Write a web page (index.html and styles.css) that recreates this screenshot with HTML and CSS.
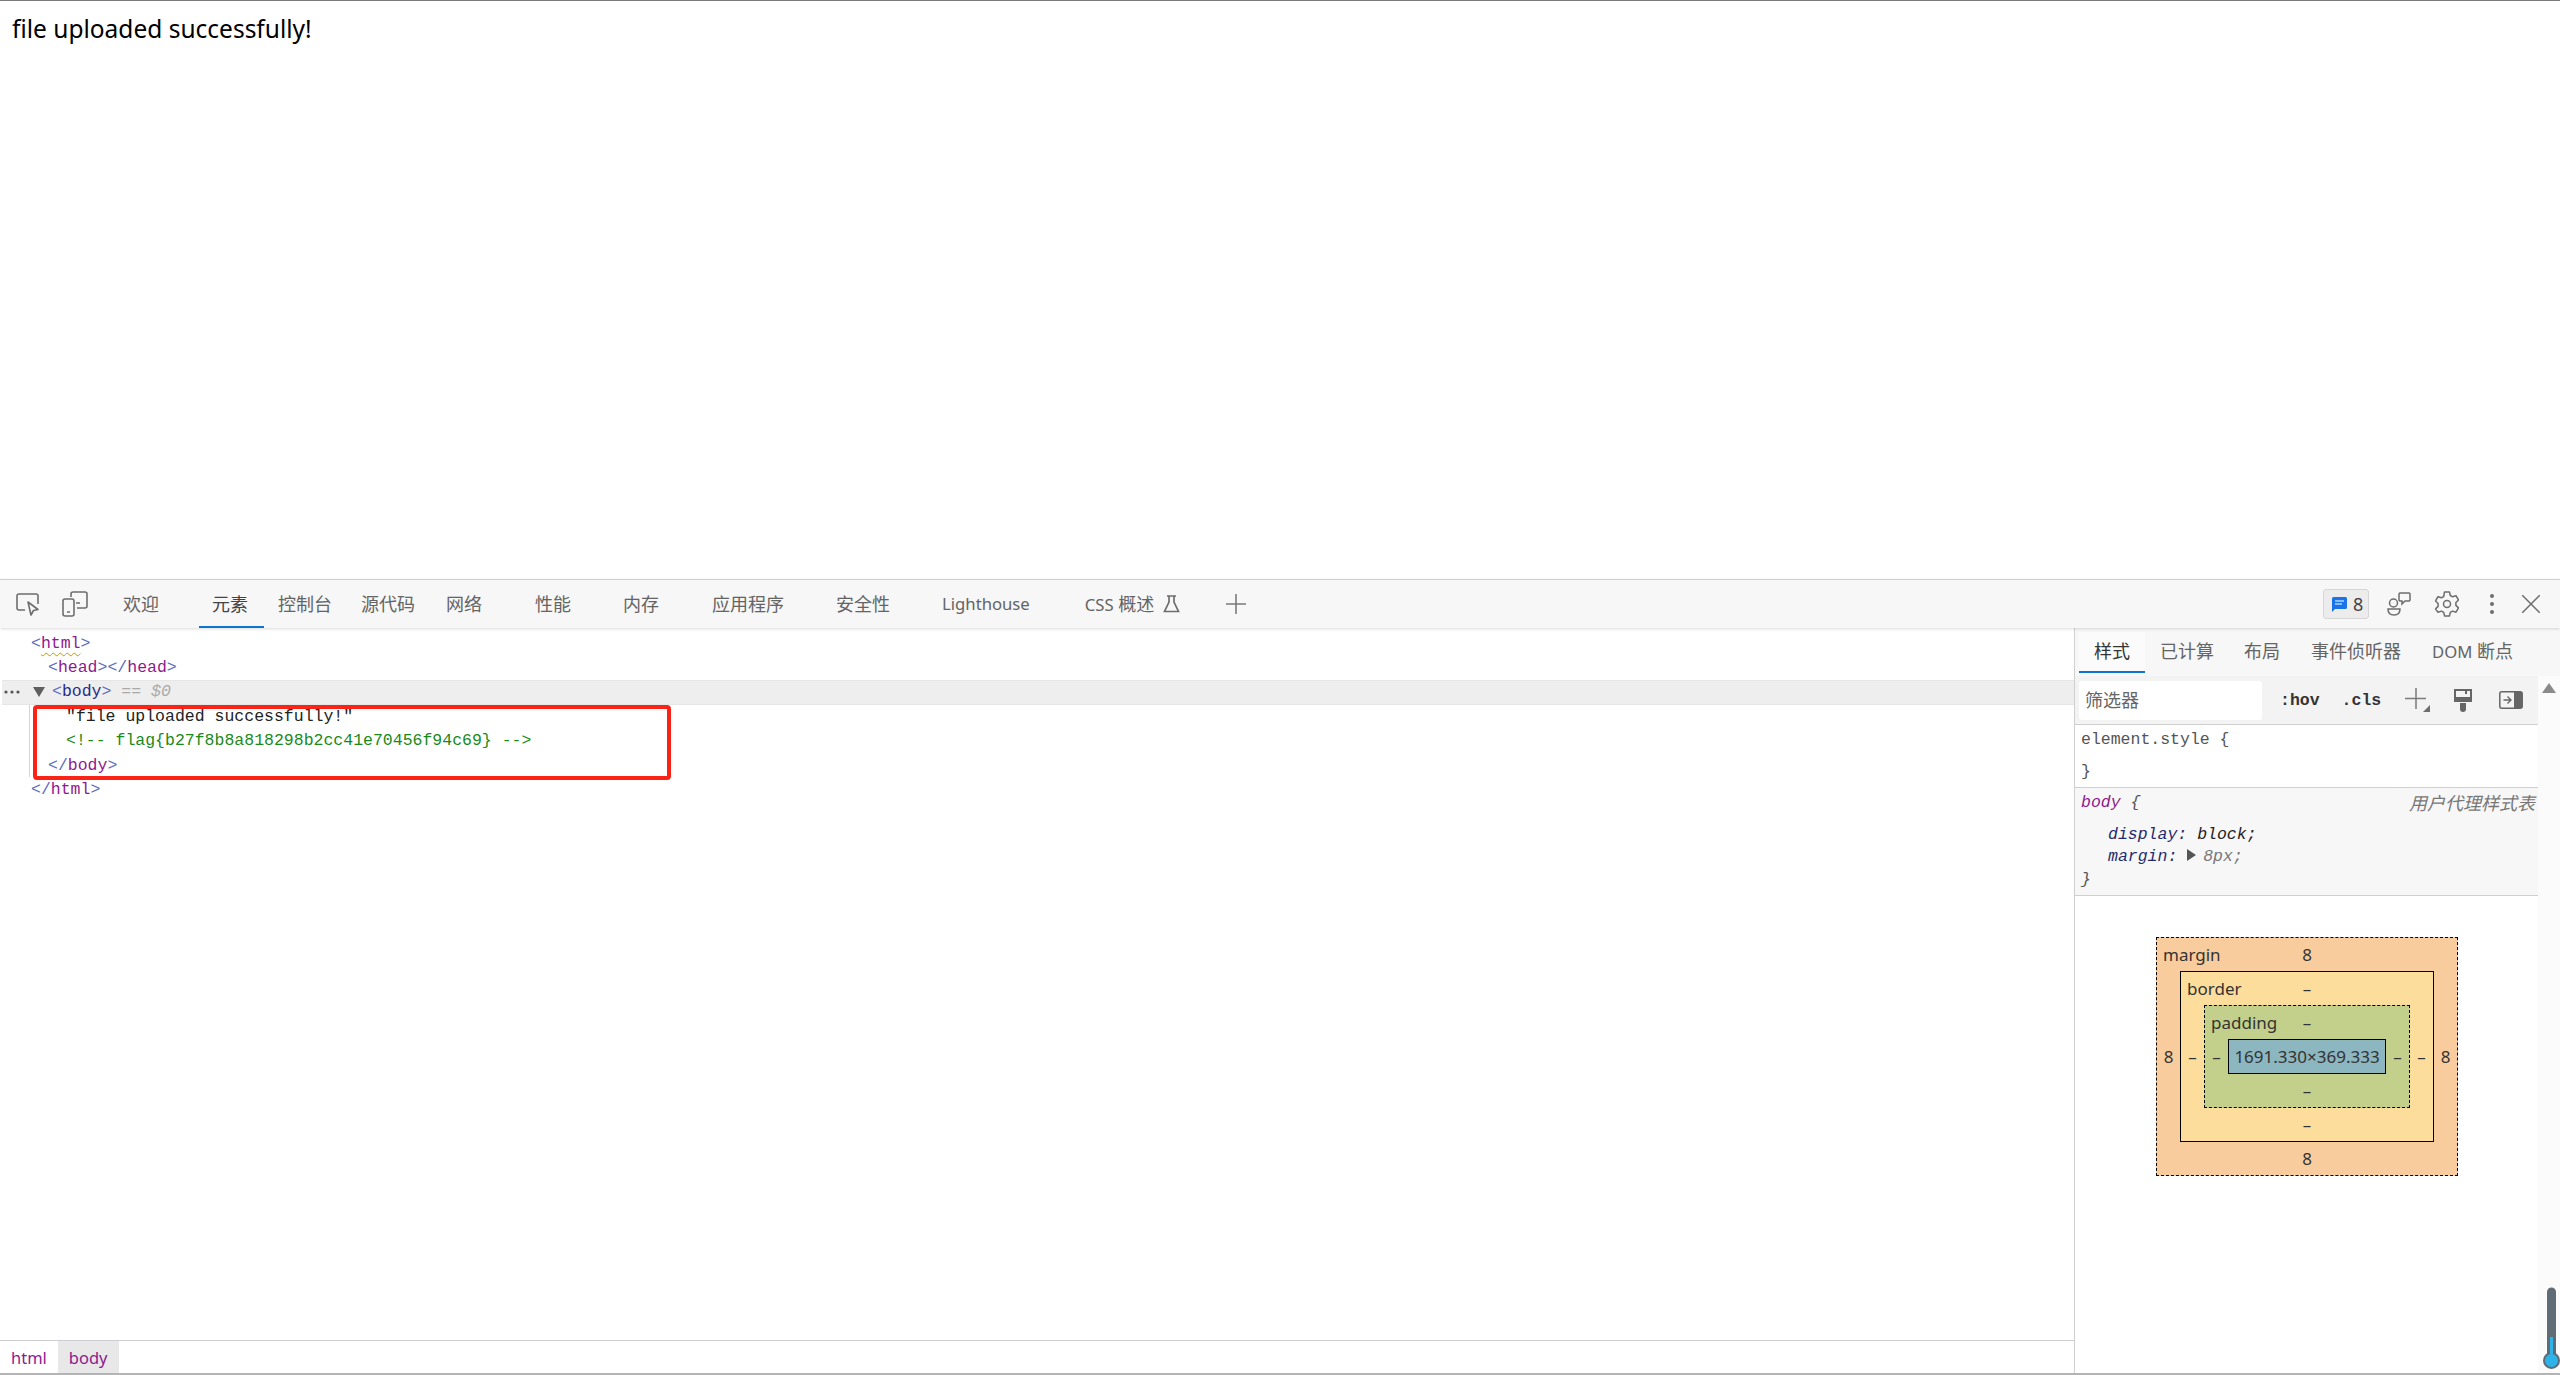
FILE: index.html
```html
<!DOCTYPE html>
<html lang="zh">
<head>
<meta charset="utf-8">
<title>DevTools</title>
<link rel="stylesheet" href="styles.css">
</head>
<body>
<main class="page">file uploaded successfully!</main>
<section class="devtools">
  <header class="toolbar">
    <svg class="tool-icon inspect" width="24" height="24" viewBox="0 0 24 24"><path d="M9 18H3a2 2 0 0 1-2-2V4a2 2 0 0 1 2-2h17a2 2 0 0 1 2 2v8" fill="none" stroke="#6e6e6e" stroke-width="1.6"/><path d="M12 10l3 13 2.5-4.5 4.5-1z" fill="none" stroke="#6e6e6e" stroke-width="1.6" stroke-linejoin="round"/></svg>
    <svg class="tool-icon device" width="26" height="26" viewBox="0 0 26 26"><path d="M9 6V3a2 2 0 0 1 2-2h12a2 2 0 0 1 2 2v12a2 2 0 0 1-2 2h-8" fill="none" stroke="#6e6e6e" stroke-width="1.6"/><rect x="1" y="8" width="11" height="17" rx="2" fill="none" stroke="#6e6e6e" stroke-width="1.6"/><path d="M5 21h3M14 12h4" stroke="#6e6e6e" stroke-width="1.6"/></svg>
    <span class="tab tab-first">欢迎</span>
    <span class="tab tab-active g53">元素</span>
    <span class="tab g30">控制台</span>
    <span class="tab g29">源代码</span>
    <span class="tab g31">网络</span>
    <span class="tab g53">性能</span>
    <span class="tab g52">内存</span>
    <span class="tab g53">应用程序</span>
    <span class="tab g52">安全性</span>
    <span class="tab g52 latin">Lighthouse</span>
    <span class="tab g55"><span class="latin">CSS</span> 概述</span>
    <svg class="flask" width="17" height="18" viewBox="0 0 17 18"><path d="M4 1h9M6 1v6L1.500 16.500h14L11 7V1" fill="none" stroke="#6e6e6e" stroke-width="1.700"/></svg>
    <svg class="add-tab" width="20" height="20" viewBox="0 0 20 20"><path d="M10 0v20M0 10h20" stroke="#7a7a7a" stroke-width="1.600"/></svg>
    <div class="toolbar-right">
      <span class="badge"><svg width="15" height="15" viewBox="0 0 15 15"><path d="M0 1.500A1.500 1.500 0 0 1 1.500 0h12A1.500 1.500 0 0 1 15 1.500v9a1.500 1.500 0 0 1-1.500 1.500H3l-3 3z" fill="#1a73e8"/><path d="M3 4h9M3 7h7" stroke="#fff" stroke-width="1.200"/></svg>8</span>
      <svg class="people" width="24" height="24" viewBox="0 0 24 24"><circle cx="6.500" cy="11" r="4" fill="none" stroke="#6e6e6e" stroke-width="1.500"/><path d="M1 17h12c0 4-2.500 6-6 6s-6-2-6-6z" fill="none" stroke="#6e6e6e" stroke-width="1.500"/><path d="M13 1h9a1.500 1.500 0 0 1 1 1v6a1.500 1.500 0 0 1-1 1h-4l-3 3V9h-2a1.500 1.500 0 0 1-1-1V2a1.500 1.500 0 0 1 1-1z" fill="none" stroke="#6e6e6e" stroke-width="1.500"/></svg>
      <svg class="gear" width="24" height="26" viewBox="0 0 24 26"><path d="M9.500 1h5l.8 3.500 2.300 1.300 3.400-1.100 2.500 4.300-2.600 2.500v2.900l2.600 2.500-2.500 4.300-3.400-1.100-2.300 1.300-.8 3.500h-5l-.8-3.500-2.300-1.300-3.400 1.100L.5 17.900l2.600-2.500v-2.900L.5 10l2.500-4.300 3.400 1.100 2.300-1.300z" fill="none" stroke="#6e6e6e" stroke-width="1.500" stroke-linejoin="round"/><circle cx="12" cy="13" r="3.500" fill="none" stroke="#6e6e6e" stroke-width="1.500"/></svg>
      <svg class="dots" width="4" height="20" viewBox="0 0 4 20"><circle cx="2" cy="2" r="2" fill="#6e6e6e"/><circle cx="2" cy="10" r="2" fill="#6e6e6e"/><circle cx="2" cy="18" r="2" fill="#6e6e6e"/></svg>
      <svg class="close" width="18" height="18" viewBox="0 0 18 18"><path d="M0 0l18 18M18 0L0 18" stroke="#6e6e6e" stroke-width="1.500"/></svg>
    </div>
  </header>
  <div class="main">
    <div class="elements">
      <div class="dom">
        <div class="guide"></div>
        <div class="row i0"><span class="pn">&lt;</span><span class="tag wavy">html</span><span class="pn">&gt;</span></div>
        <div class="row i1"><span class="pn">&lt;</span><span class="tag">head</span><span class="pn">&gt;&lt;/</span><span class="tag">head</span><span class="pn">&gt;</span></div>
        <div class="row selected"><svg class="more" width="16" height="4" viewBox="0 0 16 4"><circle cx="2" cy="2" r="1.600" fill="#555"/><circle cx="8" cy="2" r="1.600" fill="#555"/><circle cx="14" cy="2" r="1.600" fill="#555"/></svg><span class="caret"></span><span class="pn">&lt;</span><span class="tag sel-tag">body</span><span class="pn">&gt;</span><span class="eq"> == $0</span></div>
        <div class="row i2 txt">"file uploaded successfully!"</div>
        <div class="row i2 cmt">&lt;!-- flag{b27f8b8a818298b2cc41e70456f94c69} --&gt;</div>
        <div class="row i1"><span class="pn">&lt;/</span><span class="tag">body</span><span class="pn">&gt;</span></div>
        <div class="row i0"><span class="pn">&lt;/</span><span class="tag">html</span><span class="pn">&gt;</span></div>
        <div class="redbox"></div>
      </div>
      <footer class="crumbs"><span class="crumb">html</span><span class="crumb crumb-on">body</span></footer>
    </div>
    <aside class="sidebar">
      <nav class="side-tabs">
        <span class="stab stab-on">样式</span>
        <span class="stab s15">已计算</span>
        <span class="stab s30">布局</span>
        <span class="stab s31">事件侦听器</span>
        <span class="stab s31"><span class="latin">DOM</span> 断点</span>
      </nav>
      <div class="side-body">
        <div class="side-content">
          <div class="filter">
            <span class="filter-input">筛选器</span>
            <span class="hov">:hov</span>
            <span class="cls">.cls</span>
            <svg class="f-plus" width="25" height="24" viewBox="0 0 25 24"><path d="M11 0v21M0 10.500h21" stroke="#7a7a7a" stroke-width="1.500"/><path d="M25 17v7h-7z" fill="#6e6e6e"/></svg>
            <svg class="f-paint" width="18" height="23" viewBox="0 0 18 23"><path d="M1 1h16v11H1z" fill="none" stroke="#666" stroke-width="2"/><path d="M1 8h16v5H1zM6 14h6v6a3 3 0 0 1-6 0zM11 1h2v4h-2z" fill="#666"/></svg>
            <svg class="f-toggle" width="24" height="18" viewBox="0 0 24 18"><rect x=".8" y=".8" width="22.400" height="16.400" rx="2" fill="none" stroke="#666" stroke-width="1.500"/><path d="M15 1h7a1.500 1.500 0 0 1 1.500 1.500v13A1.500 1.500 0 0 1 22 17h-7z" fill="#666"/><path d="M4.500 9h7M8.500 5.500L12 9l-3.500 3.500" fill="none" stroke="#666" stroke-width="1.400"/></svg>
          </div>
          <div class="rule rule-el">
            <div class="code sel-el">element.style {</div>
            <div class="code close-el">}</div>
          </div>
          <div class="rule rule-body">
            <div class="rule-head"><span class="code it"><span class="body-sel">body</span> <span class="brace">{</span></span><span class="ua">用户代理样式表</span></div>
            <div class="code it prop p-first"><span class="pname">display:</span> <span class="pval">block;</span></div>
            <div class="code it prop"><span class="pname">margin:</span> <span class="tri"></span><span class="pdim">8px;</span></div>
            <div class="code it brace">}</div>
          </div>
          <div class="boxmodel">
            <div class="bm bm-margin">
              <span class="lbl">margin</span>
              <span class="val top">8</span>
              <span class="val left">8</span>
              <div class="bm bm-border center">
                <span class="lbl">border</span>
                <span class="val top">–</span>
                <span class="val left">–</span>
                <div class="bm bm-padding center">
                  <span class="lbl">padding</span>
                  <span class="val top">–</span>
                  <span class="val left">–</span>
                  <div class="bm-content center">1691.330×369.333</div>
                  <span class="val right">–</span>
                  <span class="val bottom">–</span>
                </div>
                <span class="val right">–</span>
                <span class="val bottom">–</span>
              </div>
              <span class="val right">8</span>
              <span class="val bottom">8</span>
            </div>
          </div>
        </div>
        <div class="scrollbar"><span class="sb-up"></span></div>
        <svg class="thermo" width="22" height="90" viewBox="0 0 22 90"><path d="M13.500 9v66" stroke="#5f6b75" stroke-width="9" stroke-linecap="round"/><circle cx="13.500" cy="77.500" r="7.500" fill="#2db2ea" stroke="#5f6b75" stroke-width="2"/><path d="M13.500 54v20" stroke="#2db2ea" stroke-width="3"/></svg>
      </div>
    </aside>
  </div>
</section>
</body>
</html>
```
FILE: styles.css
```css
* { box-sizing: border-box; }
html, body { margin: 0; padding: 0; height: 1375px; overflow: hidden; }
body {
  display: flex;
  flex-direction: column;
  background: #fff;
  font-family: "Noto Sans", "Noto Sans CJK SC", sans-serif;
  border-top: 1px solid #7a7a7a;
  border-bottom: 2px solid #b4b4b4;
}
.page {
  height: 578px;
  padding: 12px 12px 0;
  font-size: 24.500px;
  line-height: 32px;
  color: #000;
}
.devtools { flex: 1; display: flex; flex-direction: column; min-height: 0; }
.latin { font-size: 16.700px; }

/* toolbar */
.toolbar {
  height: 49px;
  flex: none;
  display: flex;
  align-items: center;
  padding-left: 16px;
  background: #f7f7f7;
  border-top: 1px solid #cfcfcf;
  box-shadow: 0 1px 3px rgba(0,0,0,.14);
  position: relative;
  z-index: 2;
  font-size: 18px;
  color: #646464;
}
.tool-icon { flex: none; }
.device { margin-left: 22px; }
.tab { position: relative; line-height: 46px; white-space: nowrap; font-size: 18px; }
.tab.latin { font-size: 16.700px; }
.tab-first { margin-left: 35px; }
.g29 { margin-left: 29px; }
.g30 { margin-left: 30px; }
.g31 { margin-left: 31px; }
.g52 { margin-left: 52px; }
.g53 { margin-left: 53px; }
.g55 { margin-left: 55px; }
.tab-active { color: #444; }
.tab-active::after {
  content: "";
  position: absolute;
  left: -13px;
  right: -16px;
  bottom: -1px;
  height: 2px;
  background: #0f74cf;
}
.flask { margin-left: 9px; flex: none; }
.add-tab { margin-left: 46px; flex: none; }
.toolbar-right { margin-left: auto; display: flex; align-items: center; padding-right: 20px; }
.badge {
  width: 46px;
  height: 30px;
  display: flex;
  align-items: center;
  gap: 6px;
  padding-left: 8px;
  background: #ececec;
  border: 1px solid #d6d6d6;
  border-radius: 3px;
  color: #444;
  font-size: 18px;
}
.people { margin-left: 18px; }
.gear { margin-left: 24px; }
.dots { margin-left: 31px; }
.close { margin-left: 28px; }

/* main */
.main { flex: 1; display: flex; min-height: 0; }
.elements { flex: 1; min-width: 0; display: flex; flex-direction: column; }
.dom {
  flex: 1;
  position: relative;
  padding-top: 4px;
  font-family: "Liberation Mono", monospace;
  font-size: 16.500px;
}
.row { height: 24.400px; line-height: 24.400px; white-space: pre; }
.i0 { padding-left: 31px; }
.i1 { padding-left: 48px; }
.i2 { padding-left: 66px; }
.pn { color: #5a6bc4; }
.tag { color: #8e1a8e; }
.wavy { text-decoration: underline wavy #c79a00 1px; text-underline-offset: 4px; }
.sel-tag { color: #2a2a8a; }
.txt { color: #222; }
.cmt { color: #1a8a1a; }
.selected { display: flex; align-items: center; background: #eeeeee; border-top: 1px solid #e6e6e6; border-bottom: 1px solid #e6e6e6; padding-left: 2px; margin-left: 2px; height: 25px; margin-top: -1px; }
.more { flex: none; margin-right: 13px; }
.caret { width: 0; height: 0; border-left: 6px solid transparent; border-right: 6px solid transparent; border-top: 10px solid #5f5f5f; margin-right: 7px; }
.eq { color: #aaa; font-style: italic; white-space: pre; }
.guide { position: absolute; left: 29px; top: 77px; width: 1px; height: 72px; background: #c5d8f0; }
.redbox {
  position: absolute;
  left: 33px;
  top: 77px;
  width: 638px;
  height: 75px;
  border: 4px solid #fb2315;
  border-radius: 4px;
}
.crumbs {
  flex: none;
  height: 33px;
  display: flex;
  border-top: 1px solid #cbcdd2;
  font-size: 16.500px;
  color: #8e1a8e;
}
.crumb { padding: 0 11px; line-height: 33px; }
.crumb-on { background: #e8e8e8; }

/* sidebar */
.sidebar { flex: none; width: 486px; border-left: 1px solid #d0d0d0; display: flex; flex-direction: column; }
.side-tabs { flex: none; height: 48px; display: flex; align-items: flex-start; padding: 4px 0 0 4px; background: #f7f7f7; font-size: 18px; color: #646464; }
.stab { height: 41px; line-height: 39px; white-space: nowrap; }
.stab-on { width: 66px; text-align: center; background: #fbfbfb; color: #333; border-bottom: 2px solid #0f74cf; }
.s15 { margin-left: 15px; }
.s30 { margin-left: 30px; }
.s31 { margin-left: 31px; }
.side-body { flex: 1; min-height: 0; display: flex; position: relative; }
.side-content { flex: 1; min-width: 0; }
.filter { height: 49px; display: flex; align-items: center; padding-left: 4px; background: #f3f3f3; border-bottom: 1px solid #cfcfcf; }
.filter-input { width: 183px; height: 39px; line-height: 38px; padding-left: 6px; background: #fff; border-radius: 3px; font-size: 18px; color: #666; }
.hov, .cls { font-family: "Liberation Mono", monospace; font-weight: 700; font-size: 16.500px; color: #333; }
.hov { margin-left: 18px; }
.cls { margin-left: 22px; }
.f-plus { margin-left: 24px; }
.f-paint { margin-left: 24px; }
.f-toggle { margin-left: 27px; }
.code { font-family: "Liberation Mono", monospace; font-size: 16.500px; white-space: pre; line-height: 24px; color: #555; }
.it { font-style: italic; }
.rule { padding-left: 6px; border-bottom: 1px solid #cfcfcf; }
.rule-el { height: 63px; padding-top: 3px; }
.close-el { margin-top: 8px; }
.rule-body { height: 108px; background: #f7f7f7; padding-top: 3px; }
.rule-head { display: flex; justify-content: space-between; padding-right: 3px; }
.body-sel { color: #8e1a8e; }
.brace { color: #555; }
.ua { font-size: 18px; font-style: italic; color: #777; line-height: 24px; }
.prop { padding-left: 27px; line-height: 22px; }
.p-first { margin-top: 9px; }
.pname { color: #1f2a6e; }
.pval { color: #222; }
.pdim { color: #777; }
.tri { display: inline-block; width: 0; height: 0; border-left: 9px solid #555; border-top: 6px solid transparent; border-bottom: 6px solid transparent; margin-right: 7px; }

/* box model */
.boxmodel { padding: 41px 0 0 81px; font-size: 17px; color: #333; }
.bm {
  position: relative;
  display: grid;
  grid-template-columns: 23px minmax(0, 1fr) 23px;
  grid-template-rows: 33px minmax(0, 1fr) 33px;
  grid-template-areas: ". top ." "left center right" ". bottom .";
  align-items: center;
  justify-items: center;
}
.top { grid-area: top; }
.left { grid-area: left; }
.right { grid-area: right; }
.bottom { grid-area: bottom; }
.center { grid-area: center; }
.bm-margin { width: 302px; height: 239px; background: #f9cc9d; border: 1px dashed #000; }
.bm-border { width: 100%; height: 100%; background: #fddd9b; border: 1px solid #000; }
.bm-padding { width: 100%; height: 100%; background: #c3d08b; border: 1px dashed #000; }
.bm-content { display: flex; align-items: center; justify-content: center; width: 100%; height: 100%; background: #8cb6c0; border: 1px solid #000; font-size: 17px; white-space: nowrap; }
.lbl { position: absolute; left: 6px; top: 2px; line-height: 30px; }
.val { line-height: 1; }
.scrollbar { flex: none; width: 22px; background: #fbfbfb; display: flex; justify-content: center; padding-top: 7px; }
.sb-up { width: 0; height: 0; border-left: 7px solid transparent; border-right: 7px solid transparent; border-bottom: 10px solid #8a8a8a; }
.thermo { position: absolute; right: 0; bottom: 0; }
```
